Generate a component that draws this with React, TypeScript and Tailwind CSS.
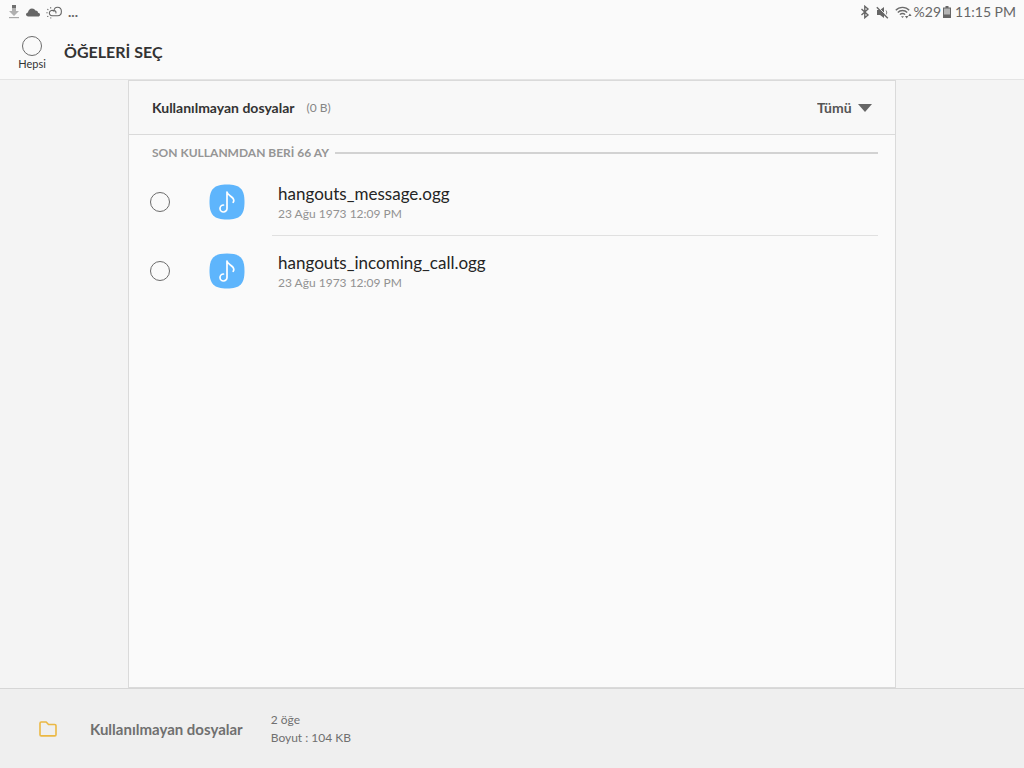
import { useState } from "react";

// ==========================================
// TYPES & DATA
// ==========================================
interface FileItem {
    name: string;
    date: string;
}

const files: FileItem[] = [
    { name: "hangouts_message.ogg", date: "23 Ağu 1973 12:09 PM" },
    { name: "hangouts_incoming_call.ogg", date: "23 Ağu 1973 12:09 PM" },
];

// ==========================================
// ICONS
// ==========================================
const DownloadIcon = () => (
    <svg width="12" height="14" viewBox="0 0 12 14" aria-hidden="true">
        <path d="M4 0h4v3H4z" fill="#707070" />
        <path d="M4 3h4v3h3l-5 5-5-5h3z" fill="#b0b0b0" />
        <path d="M1 12h10v1.2H1z" fill="#a8a8a8" />
    </svg>
);

const CloudIcon = () => (
    <svg width="14" height="9" viewBox="0 0 14 9" fill="#666" aria-hidden="true">
        <path d="M2.3 8.5C.9 8.5 0 7.7 0 6.6 0 5.5.9 4.7 2 4.6 2.1 2.2 3.9.5 6 .5c1.6 0 2.8.8 3.4 2.1C11 2.5 12 3.5 12 4.8c1.2.1 2 .9 2 1.900s-.8 1.800-2 1.800z" />
    </svg>
);

const WeatherIcon = () => (
    <svg width="16" height="13" viewBox="0 0 16 13" fill="none" stroke="#666" strokeWidth="1.1" strokeLinecap="round" aria-hidden="true">
        <path d="M6.600 9.700A2.700 2.700 0 1 1 8 5.200M7 9.700h4.700c2.200 0 3.700-1.800 3.700-4.200S13.800 1.200 11.500 1.200C9.500 1.200 8.200 2.500 8 4.500 9.500 4.600 10.300 5.700 9.900 7" />
        <path d="M.8 6.800h.4M1.700 3.300l.3.300M4.700 1.600v.4M1.900 10.300l-.2.200M4.800 11.800v.2" />
    </svg>
);

const BluetoothIcon = () => (
    <svg width="10" height="14" viewBox="0 0 10 14" fill="none" stroke="#666" strokeWidth="1.4" aria-hidden="true">
        <path d="M1.500 4l6.500 6-3.200 2.700V1.300L8 4l-6.500 6" />
    </svg>
);

const MuteIcon = () => (
    <svg width="13" height="13" viewBox="0 0 13 13" aria-hidden="true">
        <path d="M1 4h3l4-3v11L4 9H1z" fill="#666" />
        <path d="M10 4.500c.9 1 .9 3 0 4" stroke="#666" fill="none" />
        <path d="M1.800.8l11 11" stroke="#fafafa" />
        <path d="M.8 1.200l11 11" stroke="#666" strokeWidth="1.400" />
    </svg>
);

const WifiIcon = () => (
    <svg width="17" height="13" viewBox="0 0 17 13" fill="none" stroke="#6c6c6c" strokeWidth="1.300" aria-hidden="true">
        <path d="M.8 4.300C4.300.5 10.700.5 14.200 4.300M2.800 6.500c2.500-2.700 6.900-2.700 9.400 0M4.900 8.600c1.400-1.500 3.800-1.500 5.200 0" />
        <path d="M6 10.300h3L7.500 12z" fill="#6c6c6c" stroke="none" />
        <path d="M10 10l1.700 2.500L13.400 10zM13.200 10h3.400l-1.700-2.500z" fill="#666" stroke="none" />
    </svg>
);

const BatteryIcon = () => (
    <svg width="8" height="12" viewBox="0 0 8 12" aria-hidden="true">
        <path d="M2.500 0h3v1.500H8V12H0V1.500h2.500z" fill="#666" />
        <path d="M1 2.500h6v6H1z" fill="#b4b4b4" />
    </svg>
);

const MusicIcon = () => (
    <svg className="shrink-0" width="36" height="36" viewBox="0 0 36 36" fill="none" aria-hidden="true">
        <path d="M18 .5C31 .5 35.500 5 35.500 18S31 35.500 18 35.500.5 31 .5 18 5 .5 18 .5z" fill="#5eb5fc" />
        <path d="M18 8v16.500a3.500 3.500 0 1 1-3.500-3.500M18 8c.5 3.800 6.800 4.300 6.800 8.500 0 .7-.2 1.200-.6 1.800" stroke="#fff" strokeWidth="1.700" strokeLinecap="round" strokeLinejoin="round" />
    </svg>
);

const FolderIcon = () => (
    <svg width="18" height="16" viewBox="0 0 18 16" fill="none" stroke="#ebb844" strokeWidth="1.600" strokeLinejoin="round" aria-hidden="true">
        <path d="M1 2.200C1 1.400 1.400 1 2.200 1h5l2.300 2.500h6.300c.8 0 1.200.4 1.200 1.200v9c0 .8-.4 1.200-1.200 1.200H2.200C1.400 14.900 1 14.500 1 13.700z" />
    </svg>
);

// ==========================================
// HELPER COMPONENTS
// ==========================================
const RoundCheckbox = (props: React.InputHTMLAttributes<HTMLInputElement>) => (
    <input
        {...props}
        type="checkbox"
        className="block size-5 shrink-0 appearance-none rounded-full border border-[#6b6b6b] checked:bg-sky-400"
    />
);

// ==========================================
// MAIN COMPONENT
// ==========================================
export default function App() {
    const [selected, setSelected] = useState<number[]>([]);
    const [filter, setFilter] = useState("all");

    const toggle = (index: number) => {
        setSelected(selected.includes(index) ? selected.filter((i) => i !== index) : [...selected, index]);
    };

    const toggleAll = () => {
        setSelected(selected.length === files.length ? [] : files.map((_, i) => i));
    };

    return (
        <div className="flex min-h-screen flex-col bg-[#f4f4f4] font-['Lato',sans-serif] text-[#333]">
            {/* Top bar */}
            <header className="border-b border-[#e4e4e4] bg-[#fafafa]">
                <div className="flex h-6 items-center justify-between px-2 text-sm leading-5 text-[#666]">
                    <div className="flex items-center gap-1.5">
                        <DownloadIcon />
                        <CloudIcon />
                        <WeatherIcon />
                        <span className="font-bold">...</span>
                    </div>
                    <div className="flex items-center">
                        <div className="flex items-center gap-1.5">
                            <BluetoothIcon />
                            <MuteIcon />
                            <WifiIcon />
                        </div>
                        <span className="mx-0.5">%29</span>
                        <BatteryIcon />
                        <span className="ml-1">11:15 PM</span>
                    </div>
                </div>
                <div className="flex h-[55px] items-center">
                    <label className="flex w-16 flex-col items-center pt-1 text-[11px] leading-4">
                        <RoundCheckbox checked={selected.length === files.length} onChange={toggleAll} />
                        Hepsi
                    </label>
                    <h1 className="text-base leading-5 font-bold">ÖĞELERİ SEÇ</h1>
                </div>
            </header>

            {/* File list */}
            <main className="mx-auto flex w-3/4 flex-1 flex-col border border-[#dadada] bg-[#fafafa]">
                <div className="flex h-[54px] items-center border-b border-[#dadada] bg-[#f8f8f8] px-[23px]">
                    <h2 className="text-sm leading-5 font-bold">Kullanılmayan dosyalar</h2>
                    <span className="ml-3 text-xs text-[#858585]">(0 B)</span>
                    <div className="relative ml-auto">
                        <select
                            aria-label="Tümü"
                            value={filter}
                            onChange={(e) => setFilter(e.target.value)}
                            className="block appearance-none bg-transparent pr-5 text-sm leading-5 font-bold text-[#555]"
                        >
                            <option value="all">Tümü</option>
                        </select>
                        <svg className="pointer-events-none absolute top-1.5 right-0" width="14" height="8" viewBox="0 0 14 8" fill="#666" aria-hidden="true">
                            <path d="M0 0h14L7 8z" />
                        </svg>
                    </div>
                </div>

                <div className="flex h-9 items-center gap-1.5 pr-[17px] pl-[23px]">
                    <h3 className="text-xs leading-5 font-bold text-[#959595]">SON KULLANMDAN BERİ 66 AY</h3>
                    <div className="h-0.5 flex-1 bg-[#d2d2d2]" />
                </div>

                <ul className="-mt-1 pr-[17px]">
                    {files.map((file, index) => (
                        <li key={file.name}>
                            <label className="flex items-center pl-[21px]">
                                <RoundCheckbox checked={selected.includes(index)} onChange={() => toggle(index)} />
                                <span className="mr-[27px] ml-[39px]">
                                    <MusicIcon />
                                </span>
                                <span
                                    className={`flex h-[69px] flex-1 flex-col justify-center border-b pt-1.5 pl-1.5 ${index < files.length - 1 ? "border-[#e0e0e0]" : "border-transparent"}`}
                                >
                                    <span className="text-[17px] leading-5 text-[#252525]">{file.name}</span>
                                    <span className="text-xs leading-5 text-[#929292]">{file.date}</span>
                                </span>
                            </label>
                        </li>
                    ))}
                </ul>
            </main>

            {/* Summary */}
            <footer className="flex h-20 items-center border-t border-[#d6d6d6] bg-[#efefef] pl-[39px] text-[#707070]">
                <FolderIcon />
                <h2 className="ml-[33px] text-[15px] leading-5 font-bold">Kullanılmayan dosyalar</h2>
                <div className="ml-7 text-xs leading-[18px]">
                    <p>2 öğe</p>
                    <p>Boyut : 104 KB</p>
                </div>
            </footer>
        </div>
    );
}
